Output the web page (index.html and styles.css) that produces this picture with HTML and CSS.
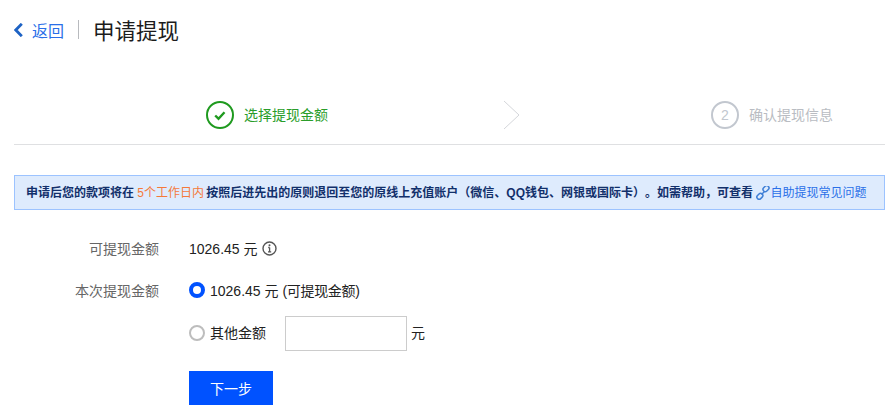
FILE: index.html
```html
<!DOCTYPE html>
<html lang="zh-CN">
<head>
<meta charset="utf-8">
<title>申请提现</title>
<link rel="stylesheet" href="styles.css">
</head>
<body>
<header class="head">
  <a class="back" href="#">
    <svg class="back-icon" width="9" height="14" viewBox="0 0 9 14"><path d="M7.800 .8 1.800 7l6 6.200" fill="none" stroke="#1d62c4" stroke-width="2.800"/></svg>
    <span>返回</span>
  </a>
  <span class="sep"></span>
  <h1 class="title">申请提现</h1>
</header>
<div class="steps">
  <div class="step done">
    <span class="dot"><svg width="14" height="12" viewBox="0 0 14 12"><path d="M2.200 6.500 5.500 9.700 11.500 3.300" fill="none" stroke="#1f9a1f" stroke-width="2.400"/></svg></span>
    <span class="step-name">选择提现金额</span>
  </div>
  <svg class="arrow" width="18" height="30" viewBox="0 0 18 30"><path d="M1 1l15 14L1 29" fill="none" stroke="#d4d6da" stroke-width="1"/></svg>
  <div class="step todo">
    <span class="dot">2</span>
    <span class="step-name">确认提现信息</span>
  </div>
</div>
<div class="notice">申请后您的款项将在 <em>5个工作日内</em> 按照后进先出的原则退回至您的原线上充值账户（微信、QQ钱包、网银或国际卡）。如需帮助，可查看 <a class="help" href="#"><svg width="14" height="14" viewBox="0 0 14 14"><g fill="none" stroke="#3f7fd6" stroke-width="1.500"><rect x="7" y="0.500" width="6.500" height="4.500" rx="2.200" transform="rotate(-45 10 3)"/><rect x="0.800" y="8" width="6.500" height="4.500" rx="2.200" transform="rotate(-45 4 10.500)"/><path d="M5.500 8.500 8.500 5.500"/></g></svg>自助提现常见问题</a></div>
<form class="form">
  <div class="row row-a">
    <span class="label">可提现金额</span>
    <span class="value">1026.45 元</span>
    <svg class="info" width="15" height="15" viewBox="0 0 15 15"><circle cx="7.500" cy="7.500" r="6.500" fill="none" stroke="#555" stroke-width="1.400"/><path d="M7.600 6.500v4.200M6.200 6.500h1.400M6 10.800h3.200" fill="none" stroke="#555" stroke-width="1.300"/><circle cx="7.500" cy="4.200" r="1" fill="#555"/></svg>
  </div>
  <div class="row row-b">
    <span class="label">本次提现金额</span>
    <span class="radio on"></span>
    <span class="value">1026.45 元 <span class="hint">(可提现金额)</span></span>
  </div>
  <div class="row row-c">
    <span class="label"></span>
    <span class="radio"></span>
    <span class="value other">其他金额</span>
    <input class="amount" type="text" aria-label="其他金额">
    <span class="value">元</span>
  </div>
  <div class="row row-d">
    <span class="label"></span>
    <button class="next" type="button">下一步</button>
  </div>
</form>
</body>
</html>
```
FILE: styles.css
```css
* { box-sizing: border-box; }
html, body { margin: 0; padding: 0; }
body {
  width: 885px;
  height: 413px;
  overflow: hidden;
  background: #fff;
  color: #222;
  font-family: "Liberation Sans", "Noto Sans CJK SC", sans-serif;
  font-size: 14px;
  text-spacing-trim: space-all;
}
.head {
  display: flex;
  align-items: center;
  height: 59px;
  padding-left: 14px;
}
.back {
  display: flex;
  align-items: center;
  gap: 9px;
  color: #2a6fe8;
  font-size: 16px;
  text-decoration: none;
}
.sep {
  width: 1px;
  height: 19px;
  margin: 0 14px 0 14px;
  background: #b8babe;
}
.title {
  margin: 0;
  color: #1c1c1c;
  font-size: 21.500px;
  font-weight: 400;
}
.steps {
  display: flex;
  align-items: center;
  height: 86px;
  margin-left: 14px;
  padding: 27px 0 0 192px;
  border-bottom: 1px solid #dfe0e2;
}
.step {
  display: flex;
  align-items: center;
  gap: 10px;
}
.step-name { margin-bottom: 2px; }
.dot {
  display: flex;
  align-items: center;
  justify-content: center;
  width: 28px;
  height: 28px;
  border: 2px solid currentColor;
  border-radius: 50%;
  font-size: 14px;
}
.done { color: #2a9d2a; }
.done .dot { color: #1f9a1f; }
.todo { color: #b9bcc2; }
.todo .dot { color: #c2c7cf; }
.arrow { margin: 0 190px 0 175px; }
.notice {
  height: 35px;
  margin: 30px 0 0 14px;
  padding: 1px 0 0 11px;
  border: 1px solid #9cc3ff;
  background: #deebfd;
  color: #12306b;
  font-size: 12px;
  font-weight: 700;
  line-height: 33px;
  white-space: nowrap;
}
.notice em {
  margin-right: -1px;
  color: #f5793a;
  font-style: normal;
  font-weight: 400;
}
.help {
  color: #2a6fe8;
  font-weight: 400;
  text-decoration: none;
}
.help svg { vertical-align: -3px; }
.form {
  display: flex;
  flex-direction: column;
}
.row {
  display: flex;
  align-items: center;
}
.row-a { margin-top: 26px; height: 24px; }
.row-b { margin-top: 18px; height: 24px; }
.row-c { margin-top: 14px; height: 35px; }
.row-d { margin-top: 20px; }
.row-c .radio { margin-bottom: 1px; }
.row-c .value { margin-bottom: 4px; }
.label {
  flex: none;
  width: 159px;
  margin-right: 30px;
  color: #666;
  text-align: right;
}
.value { color: #222; }
.hint { letter-spacing: -0.300px; }
.info { margin-left: 4px; }
.radio {
  flex: none;
  width: 16px;
  height: 16px;
  margin-right: 5px;
  border: 2px solid #bdbdbd;
  border-radius: 50%;
  background: #fff;
}
.radio.on { border: 4px solid #0052ff; }
.other { margin-right: 19px; }
.amount {
  width: 122px;
  height: 35px;
  margin-right: 4px;
  border: 1px solid #ccc;
  border-radius: 0;
  background: #fff;
  outline: none;
}
.next {
  width: 84px;
  height: 34px;
  padding: 0;
  border: 0;
  background: #0052ff;
  color: #fff;
  font: inherit;
}
```
